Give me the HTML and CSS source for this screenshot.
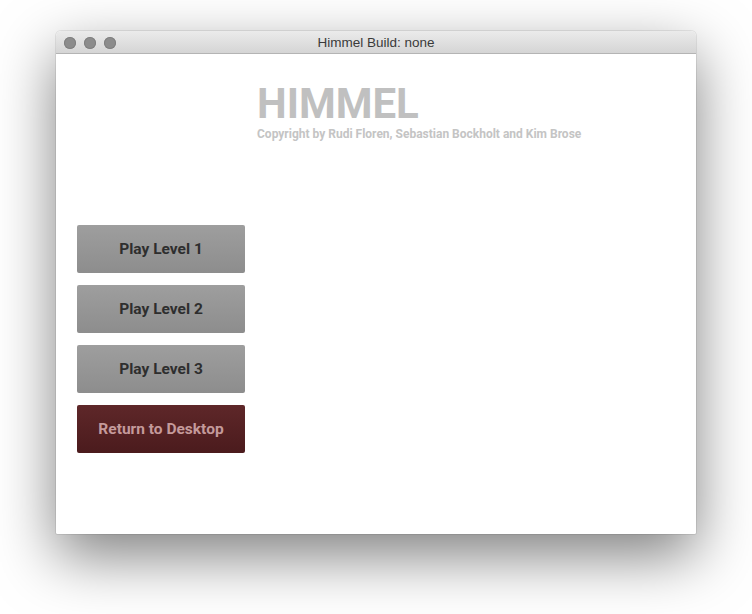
FILE: index.html
```html
<!DOCTYPE html>
<html>
<head>
<meta charset="utf-8">
<link rel="stylesheet" href="styles.css">
</head>
<body>
<div class="window">
  <div class="titlebar">
    <div class="lights">
      <span class="light"></span><span class="light"></span><span class="light"></span>
    </div>
    <div class="title">Himmel Build: none</div>
  </div>
  <div class="content">
    <div class="header">
      <div class="logo">HIMMEL</div>
      <div class="copyright">Copyright by Rudi Floren, Sebastian Bockholt and Kim Brose</div>
    </div>
    <div class="menu">
      <button class="btn">Play Level 1</button>
      <button class="btn">Play Level 2</button>
      <button class="btn">Play Level 3</button>
      <button class="btn btn-exit">Return to Desktop</button>
    </div>
  </div>
</div>
</body>
</html>
```

FILE: styles.css
```css
html, body {
  margin: 0;
  padding: 0;
  background: #ffffff;
}
body {
  width: 752px;
  height: 614px;
  overflow: hidden;
  padding-top: 31px;
  box-sizing: border-box;
}
.window {
  margin-left: 56px;
  width: 640px;
  border-radius: 5px 5px 2px 2px;
  box-shadow: 0 22px 60px rgba(0, 0, 0, 0.5), 0 0 0 1px rgba(0, 0, 0, 0.08);
  overflow: hidden;
  background: #fff;
}
.titlebar {
  height: 23px;
  box-sizing: border-box;
  border-bottom: 1px solid #b4b4b4;
  background: linear-gradient(#ebebeb, #d5d5d5);
  display: flex;
  align-items: center;
  position: relative;
}
.lights {
  display: flex;
  gap: 8px;
  padding-left: 8px;
  position: absolute;
  left: 0;
  top: 6px;
}
.light {
  width: 12px;
  height: 12px;
  border-radius: 50%;
  background: #8c8c8c;
  box-shadow: inset 0 0 0 1px #808080;
}
.title {
  flex: 1;
  text-align: center;
  font-family: "Liberation Sans", Arial, sans-serif;
  font-size: 13.5px;
  color: #3a3a3a;
  padding-left: 0;
  padding-top: 1px;
}
.content {
  height: 480px;
  background: #fff;
  display: flex;
  flex-direction: column;
}
.header {
  padding-left: 201px;
  padding-top: 29px;
  font-family: Roboto, "Liberation Sans", sans-serif;
  font-weight: 700;
}
.logo {
  font-size: 42px;
  line-height: 42px;
  color: #c0c0c0;
}
.copyright {
  font-size: 12px;
  line-height: 14px;
  color: #c4c4c4;
  margin-top: 2px;
}
.menu {
  display: flex;
  flex-direction: column;
  gap: 12px;
  padding-left: 21px;
  margin-top: 84px;
}
.btn {
  width: 168px;
  height: 48px;
  border: none;
  border-radius: 2px;
  background: linear-gradient(#9e9e9e, #8d8d8d);
  color: #2e2e2e;
  font-family: Roboto, "Liberation Sans", sans-serif;
  font-weight: 700;
  font-size: 15.5px;
  padding: 0;
  margin: 0;
}
.btn-exit {
  background: linear-gradient(#5e2729, #4b1b1d);
  color: #c49a9b;
}
```
